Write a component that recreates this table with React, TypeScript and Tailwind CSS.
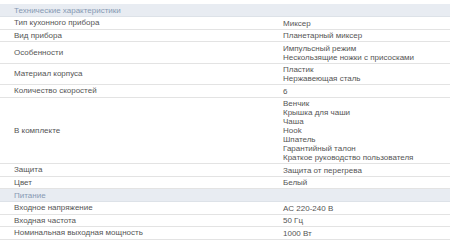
import React from "react";

type Row = { label: string; values: string[] } | { header: string };

const rows: Row[] = [
  { header: "Технические характеристики" },
  { label: "Тип кухонного прибора", values: ["Миксер"] },
  { label: "Вид прибора", values: ["Планетарный миксер"] },
  { label: "Особенности", values: ["Импульсный режим", "Нескользящие ножки с присосками"] },
  { label: "Материал корпуса", values: ["Пластик", "Нержавеющая сталь"] },
  { label: "Количество скоростей", values: ["6"] },
  {
    label: "В комплекте",
    values: [
      "Венчик",
      "Крышка для чаши",
      "Чаша",
      "Hook",
      "Шпатель",
      "Гарантийный талон",
      "Краткое руководство пользователя",
    ],
  },
  { label: "Защита", values: ["Защита от перегрева"] },
  { label: "Цвет", values: ["Белый"] },
  { header: "Питание" },
  { label: "Входное напряжение", values: ["AC 220-240 В"] },
  { label: "Входная частота", values: ["50 Гц"] },
  { label: "Номинальная выходная мощность", values: ["1000 Вт"] },
];

export default function App() {
  return (
    <div
      className="w-[450px] h-[242px] overflow-hidden bg-white pt-[4px] text-[8px] leading-[9px] text-[#555]"
      style={{ fontFamily: '"Liberation Sans", Arial, sans-serif' }}
    >
      {rows.map((r, i) =>
        "header" in r ? (
          <div
            key={i}
            className="h-[13px] flex items-center bg-[#e8ecf2] border-b border-[#dde2e8] pl-[14px] text-[#8799b3]"
          >
            {r.header}
          </div>
        ) : (
          <div key={i} className="grid grid-cols-[283px_1fr] border-b border-[#e3e3e3]">
            <div className="pl-[14px] flex items-center">{r.label}</div>
            <div className="pt-[1.5px] pb-[1px]">
              {r.values.map((v, j) => (
                <div key={j}>{v}</div>
              ))}
            </div>
          </div>
        )
      )}
    </div>
  );
}
